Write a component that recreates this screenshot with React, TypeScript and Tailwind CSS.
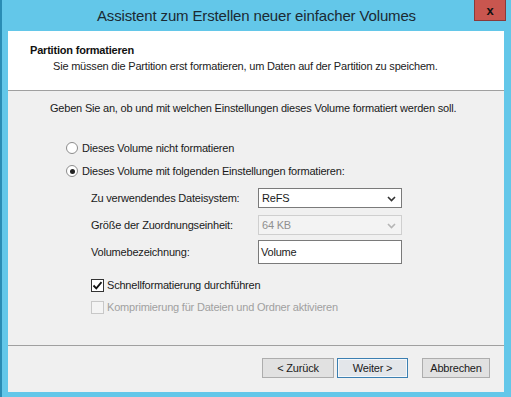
import React from "react";

const font = "font-['Liberation_Sans',Arial,sans-serif]";

const Radio = ({ checked, label }: { checked?: boolean; label: string }) => (
  <div className="flex h-4 items-center">
    <span className="flex h-[12px] w-[12px] items-center justify-center rounded-full border border-[#8c8c8c] bg-white">
      {checked && <span className="h-[5px] w-[5px] rounded-full bg-[#222]" />}
    </span>
    <span className="ml-[4px] text-[#1a1a1a]">{label}</span>
  </div>
);

const Chevron = ({ color }: { color: string }) => (
  <svg width="9" height="6" viewBox="0 0 9 6" className="absolute right-[5px] top-[7px]">
    <path d="M1 1 L4.5 4.5 L8 1" fill="none" stroke={color} strokeWidth="1.6" />
  </svg>
);

const Check = ({ checked, disabled, label }: { checked?: boolean; disabled?: boolean; label: string }) => (
  <div className="flex h-4 items-center">
    <span
      className={
        disabled
          ? "flex h-[13px] w-[13px] items-center justify-center border border-[#c8c8c8] bg-[#f4f4f4]"
          : "flex h-[13px] w-[13px] items-center justify-center border border-[#333] bg-white"
      }
    >
      {checked && (
        <svg width="11" height="11" viewBox="0 0 11 11">
          <path d="M1.5 5.5 L4.3 8.3 L9.5 2.2" fill="none" stroke="#111" strokeWidth="1.8" />
        </svg>
      )}
    </span>
    <span className={disabled ? "ml-[3px] text-[#a0a0a0]" : "ml-[3px] text-[#1a1a1a]"}>{label}</span>
  </div>
);

export default function App() {
  return (
    <div className={`flex h-[397px] w-[511px] flex-col border-l-2 border-[#2a8cb4] bg-[#63c7e9] ${font}`}>
      {/* title bar */}
      <div className="relative flex h-[31px] items-center justify-center">
        <span className="pt-[1px] text-[15px] tracking-[-0.15px] text-[#1b2a33]">Assistent zum Erstellen neuer einfacher Volumes</span>
        <div className="absolute right-[5px] top-0 flex h-[21px] w-[32px] items-center justify-center border border-t-0 border-[#8a3a3a] bg-[#c9564f]">
          <span className="text-[13px] font-bold leading-none text-[#111]">x</span>
        </div>
      </div>

      <div className="ml-[6px] mr-[7px] flex h-[361px] flex-col text-[11px] leading-4 tracking-[-0.2px]">
        {/* header */}
        <div className="h-[60px] border-b border-[#a0a0a0] bg-white pl-[22px] pt-[11px]">
          <div className="font-bold text-[#111]">Partition formatieren</div>
          <div className="pl-[23px] text-[#222]">
            Sie müssen die Partition erst formatieren, um Daten auf der Partition zu speichem.
          </div>
        </div>

        {/* body */}
        <div className="flex flex-1 flex-col bg-[#f0f0f0]">
          <div className="pl-[42px] pt-[9px] text-[#1a1a1a]">
            Geben Sie an, ob und mit welchen Einstellungen dieses Volume formatiert werden soll.
          </div>

          <div className="mt-[24px] flex flex-col gap-[7px] pl-[58px]">
            <Radio label="Dieses Volume nicht formatieren" />
            <Radio checked label="Dieses Volume mit folgenden Einstellungen formatieren:" />
          </div>

          <div className="mt-[9px] grid grid-cols-[167px_144px] grid-rows-[20px_20px_22px] gap-y-[7px] pl-[83px] text-[#1a1a1a]">
            <div className="flex items-center">Zu verwendendes Dateisystem:</div>
            <div className="relative flex items-center border border-[#7a7a7a] bg-white pl-[3px]">
              ReFS
              <Chevron color="#333" />
            </div>
            <div className="flex items-center">Größe der Zuordnungseinheit:</div>
            <div className="relative flex items-center border border-[#cfcfcf] bg-[#f3f3f3] pl-[3px] text-[#8f8f8f]">
              64 KB
              <Chevron color="#b5b5b5" />
            </div>
            <div className="-mt-[2px] flex items-center">Volumebezeichnung:</div>
            <div className="-mt-[2px] flex items-center border border-[#7a7a7a] bg-white pl-[2px]">Volume</div>
          </div>

          <div className="mt-[13px] flex flex-col gap-[6px] pl-[83px]">
            <Check checked label="Schnellformatierung durchführen" />
            <Check disabled label="Komprimierung für Dateien und Ordner aktivieren" />
          </div>

          <div className="mt-auto flex h-[47px] items-center justify-end gap-[3px] border-t border-[#a0a0a0] pr-[14px] pb-[2px] text-[#1a1a1a]">
            <button className="h-[20px] w-[72px] border border-[#adadad] bg-[#e1e1e1]">&lt; Zurück</button>
            <button className="h-[20px] w-[71px] border border-[#3c7fb1] bg-[#e3e6ea] shadow-[inset_0_0_0_1px_#f4f8fb]">Weiter &gt;</button>
            <button className="ml-[11px] h-[20px] w-[68px] border border-[#adadad] bg-[#e1e1e1]">Abbrechen</button>
          </div>
        </div>
      </div>
    </div>
  );
}
